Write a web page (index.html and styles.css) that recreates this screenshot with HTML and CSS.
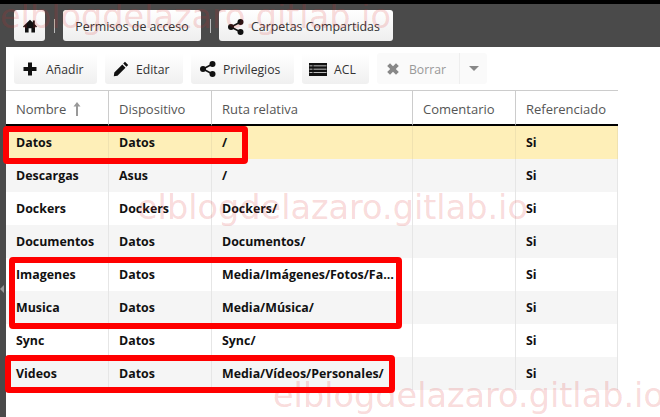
FILE: index.html
```html
<!DOCTYPE html>
<html lang="es">
<head>
<meta charset="utf-8">
<title>Carpetas Compartidas</title>
<link rel="stylesheet" href="styles.css">
</head>
<body>
<div class="app">
  <nav class="crumbs">
    <a class="crumb crumb-home"><svg class="ico" viewBox="0 0 14 14"><path d="M7 .8 L0 7.400 L1 8.500 L2 7.600 V13.500 H5.600 V9.300 H8.400 V13.500 H12 V7.600 L13 8.500 L14 7.400 L11.800 5.300 V1.500 H9.800 V3.500 Z"/></svg></a>
    <span class="sep"></span>
    <a class="crumb crumb-perm">Permisos de acceso</a>
    <span class="sep"></span>
    <a class="crumb crumb-share"><svg class="ico ico-share" viewBox="0 0 16 16"><circle cx="12.500" cy="3" r="3"/><circle cx="12.500" cy="13" r="3"/><circle cx="3" cy="8" r="3"/><path d="M12.500 3L3 8l9.500 5" fill="none" stroke="#111" stroke-width="1.600"/></svg>Carpetas Compartidas</a>
  </nav>
  <main class="panel">
    <div class="toolbar">
      <a class="btn btn-add"><svg class="ico" viewBox="0 0 14 14"><path d="M5 .5h4v4.500h4.500v4H9v4.500H5V9H.5V5H5z"/></svg>Añadir</a>
      <a class="btn btn-edit"><svg class="ico ico-share" viewBox="0 0 16 16"><path d="M12 .8l3.200 3.200-1.800 1.800-3.200-3.200zM9.300 3.500l3.200 3.200L4.500 14.700 .8 15.200l.5-3.700z"/></svg>Editar</a>
      <a class="btn btn-priv"><svg class="ico ico-share" viewBox="0 0 16 16"><circle cx="12.500" cy="3" r="3"/><circle cx="12.500" cy="13" r="3"/><circle cx="3" cy="8" r="3"/><path d="M12.500 3L3 8l9.500 5" fill="none" stroke="#111" stroke-width="1.600"/></svg>Privilegios</a>
      <a class="btn btn-acl"><svg class="ico ico-wide" viewBox="0 0 18 13"><path d="M0 0h18v13H0zM4.500 2.400v.8h13v-.8zm0 3.300v.8h13v-.8zm0 3.300v.8h13V9zM.5 2.400v.8h3v-.8zm0 3.300v.8h3v-.8zm0 3.300v.8h3V9z" fill-rule="evenodd"/></svg>ACL</a>
      <div class="split">
        <a class="btn-del"><svg class="ico" viewBox="0 0 14 14"><path d="M4 1.200L7 4.200 10 1.200 12.800 4 9.800 7 12.800 10 10 12.800 7 9.800 4 12.800 1.200 10 4.200 7 1.200 4z"/></svg>Borrar</a>
        <a class="btn-drop"><span class="caret"></span></a>
      </div>
    </div>
    <table class="grid">
      <thead>
        <tr>
          <th class="c1">Nombre <svg class="sort" viewBox="0 0 8 14"><path d="M4 0L7.500 4.500H5V14H3V4.500H.5z"/></svg></th>
          <th class="c2">Dispositivo</th>
          <th class="c3">Ruta relativa</th>
          <th class="c4">Comentario</th>
          <th class="c5">Referenciado</th>
        </tr>
      </thead>
      <tbody>
        <tr class="selected"><td>Datos</td><td>Datos</td><td>/</td><td></td><td>Si</td></tr>
        <tr class="alt"><td>Descargas</td><td>Asus</td><td>/</td><td></td><td>Si</td></tr>
        <tr><td>Dockers</td><td>Dockers</td><td>Dockers/</td><td></td><td>Si</td></tr>
        <tr class="alt"><td>Documentos</td><td>Datos</td><td>Documentos/</td><td></td><td>Si</td></tr>
        <tr><td>Imagenes</td><td>Datos</td><td>Media/Imágenes/Fotos/Familia/</td><td></td><td>Si</td></tr>
        <tr class="alt"><td>Musica</td><td>Datos</td><td>Media/Música/</td><td></td><td>Si</td></tr>
        <tr><td>Sync</td><td>Datos</td><td>Sync/</td><td></td><td>Si</td></tr>
        <tr class="alt"><td>Videos</td><td>Datos</td><td>Media/Vídeos/Personales/</td><td></td><td>Si</td></tr>
      </tbody>
    </table>
  </main>
  <span class="collapse-arrow"></span>
  <div class="mark mark-1" aria-hidden="true">elblogdelazaro.gitlab.io</div>
  <div class="mark mark-2" aria-hidden="true">elblogdelazaro.gitlab.io</div>
  <div class="mark mark-3" aria-hidden="true">elblogdelazaro.gitlab.io</div>
  <div class="box box-1"></div>
  <div class="box box-2"></div>
  <div class="box box-3"></div>
</div>
</body>
</html>
```
FILE: styles.css
```css
* { box-sizing: border-box; }
html, body { margin: 0; padding: 0; }
body { width: 660px; height: 417px; overflow: hidden; background: #4a4a4a; font-family: "Open Sans", sans-serif; font-size: 12.4px; }
.app { position: relative; width: 660px; height: 417px; overflow: hidden; border-top: 4px solid #000; display: flex; flex-direction: column; }
.ico { width: 14px; height: 14px; fill: #111; flex: none; }
.ico-wide { width: 18px; height: 13px; }
.ico-share { width: 16px; height: 16px; }

.crumbs { height: 43px; flex: none; display: flex; align-items: center; padding: 0 0 0 14px; }
.crumb { height: 31px; background: linear-gradient(#fff, #eee); border-radius: 3px; display: flex; align-items: center; color: #333; white-space: nowrap; padding-top: 2px; }
.crumb-home { width: 31px; justify-content: center; padding-top: 0; }
.crumb-perm { width: 138px; justify-content: center; }
.crumb-share { width: 174px; padding-left: 9px; gap: 7px; }
.sep { width: 1px; height: 14px; background: #bbb; margin: 0 8px 0 9px; }

.panel { flex: 1; margin-left: 6px; background: #fff; }
.toolbar { height: 43px; display: flex; align-items: center; gap: 8px; padding-left: 8px; font-size: 12.2px; }
.btn { height: 31px; background: linear-gradient(#fff, #f0f0f0); border-radius: 3px; display: flex; align-items: center; color: #333; padding-top: 1px; }
.btn-add { width: 83px; padding-left: 9px; gap: 9px; }
.btn-edit { width: 78px; padding-left: 8px; gap: 7px; }
.btn-priv { width: 103px; padding-left: 9px; gap: 7px; }
.btn-acl { width: 67px; padding-left: 7px; gap: 7px; }
.split { height: 31px; width: 110px; display: flex; border-radius: 3px; background: #fafafa; }
.btn-del { width: 83px; display: flex; align-items: center; padding: 1px 0 0 9px; gap: 9px; color: #999; border-right: 1px solid #eee; }
.btn-del .ico { fill: #888; }
.btn-drop { flex: 1; display: flex; align-items: center; justify-content: center; }
.caret { width: 0; height: 0; border: 5px solid transparent; border-top: 5px solid #888; border-bottom: 0; }

.grid { border-collapse: separate; border-spacing: 0; table-layout: fixed; width: 612px; }
.grid th { height: 36px; border-top: 1px solid #ccc; border-bottom: 2px solid #000; border-right: 1px solid #ccc; font-size: 13px; font-weight: 400; color: #555; text-align: left; padding: 3px 10px 0; white-space: nowrap; }
.grid th:last-child { border-right: 0; }
.c1 { width: 103px; }
.c2 { width: 103px; }
.c3 { width: 201px; }
.c4 { width: 103px; }
.c5 { width: 102px; }
.sort { width: 8px; height: 14px; fill: #999; margin-left: 3px; vertical-align: -2px; }
.grid td { height: 33px; padding: 0 10px; line-height: 17px; font-weight: 700; color: #111; border-right: 1px solid #e6e6e6; white-space: nowrap; overflow: hidden; text-overflow: ellipsis; }
.grid .alt td { background: #f5f5f5; }
.grid .selected td { background: #feefb8; border-right-color: #f0e2b0; }

.collapse-arrow { position: absolute; left: 0; top: 281px; width: 0; height: 0; border: 4px solid transparent; border-right: 4px solid #999; border-left: 0; }
.mark { position: absolute; font-family: "DejaVu Sans", sans-serif; font-size: 33.5px; line-height: 48px; color: rgba(220, 40, 40, .18); white-space: nowrap; pointer-events: none; }
.mark-1 { left: 0; top: -11px; }
.mark-2 { left: 137px; top: 180px; }
.mark-3 { left: 273px; top: 368px; }
.box { position: absolute; border: 6px solid #f00; border-radius: 4px; }
.box-1 { left: 3px; top: 122px; width: 245px; height: 38px; }
.box-2 { left: 9px; top: 253px; width: 393px; height: 72px; }
.box-3 { left: 5px; top: 351px; width: 390px; height: 38px; }
```
